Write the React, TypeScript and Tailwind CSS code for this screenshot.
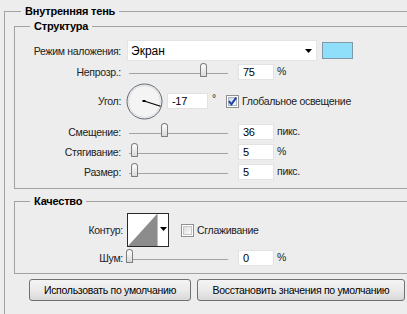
const sliders = { opacity: 75, offset: 36, choke: 5, size: 5, noise: 0 };

function Slider({ value }: { value: number }) {
  // track 99px; thumb centre follows the value
  const left = Math.round((value / 100) * 98) - 3;
  return (
    <div className="relative ml-[8px] h-[16px] w-[99px] shrink-0">
      <div className="mt-[9px] h-px w-full bg-[#a3a3a3]" />
      <div
        className="absolute top-[-1px] h-[14px] w-[7px] rounded-t-[4px] rounded-b-[1px] border border-[#7d7d7d] bg-gradient-to-b from-white to-[#d9d9d9]"
        style={{ left }}
      />
    </div>
  );
}

function Field({ value, width = "w-[36px]", className = "" }: { value: string; width?: string; className?: string }) {
  return (
    <div className={`${width} ${className} flex h-[16px] shrink-0 items-center border border-[#e2e2e2] bg-white pl-[4px] text-[11px] text-black`}>
      {value}
    </div>
  );
}

function Check({ checked }: { checked?: boolean }) {
  return (
    <svg width="13" height="13" className="shrink-0">
      <defs>
        <linearGradient id={checked ? "cbOn" : "cbOff"} x1="0" y1="0" x2="1" y2="1">
          <stop offset="0" stopColor={checked ? "#c9d4e6" : "#d9d9d9"} />
          <stop offset="1" stopColor="#ffffff" />
        </linearGradient>
      </defs>
      <rect x="0.5" y="0.5" width="12" height="12" fill="#fff" stroke="#8e8f8f" />
      <rect x="2.5" y="2.5" width="8" height="8" fill={`url(#${checked ? "cbOn" : "cbOff"})`} stroke={checked ? "#aab6c8" : "#c6c6c6"} />
      {checked && <path d="M3 6.2 L5.4 9.4 L10.2 2.6" stroke="#23459a" strokeWidth="2" fill="none" />}
    </svg>
  );
}

function SliderRow({ label, value, unit, className = "" }: { label: string; value: number; unit: string; className?: string }) {
  return (
    <div className={`flex h-[16px] items-center ${className}`}>
      <div className="w-[106px] shrink-0 text-right">{label}</div>
      <Slider value={value} />
      <Field value={String(value)} className="ml-[10px]" />
      <div className="ml-[3px] -mt-[3px]">{unit}</div>
    </div>
  );
}

export default function App() {
  return (
    <div className="h-[314px] w-[407px] overflow-hidden bg-[#ededed] pl-[4px] pt-[4px] font-['Liberation_Sans',Arial,sans-serif] text-[10.5px] leading-[14px] tracking-[-0.3px] text-[#222]">
      <fieldset className="w-[430px] border border-[#a2a2a2]">
        <legend className="ml-[16px] px-[4px] text-[11px] font-bold tracking-[-0.2px] text-black">Внутренняя тень</legend>

        <fieldset className="ml-[9px] mt-[1px] w-[420px] border border-[#a2a2a2] pb-[8px] pt-[7px]">
          <legend className="ml-[15px] px-[4px] text-[11px] font-bold tracking-[-0.2px] text-black">Структура</legend>

          <div className="flex h-[21px] items-center">
            <div className="w-[106px] shrink-0 text-right">Режим наложения:</div>
            <div className="ml-[6px] flex h-[21px] w-[190px] items-center justify-between border border-[#e4e4e4] bg-white pl-[3px] pr-[4px] text-[12px] tracking-normal text-black">
              <span>Экран</span>
              <svg width="7" height="4">
                <path d="M0 0 H7 L3.5 4 Z" fill="#000" />
              </svg>
            </div>
            <div className="ml-[5px] h-[17px] w-[31px] border border-[#7f9aa6] bg-[#8fdffa]" />
          </div>

          <SliderRow label="Непрозр.:" value={sliders.opacity} unit="%" className="mt-[3px]" />

          <div className="mt-[3px] flex h-[36px] items-center">
            <div className="w-[106px] shrink-0 text-right">Угол:</div>
            <svg width="37" height="37" className="ml-[5px] shrink-0">
              <circle cx="18.5" cy="18.5" r="17.5" fill="#f4f4f4" stroke="#5d6875" />
              <circle cx="18.5" cy="18.5" r="16" fill="none" stroke="#dcdcdc" />
              <line x1="18" y1="18" x2="34.6" y2="23.2" stroke="#000" strokeWidth="1.2" />
              <rect x="16.5" y="17" width="3" height="2" fill="#000" />
            </svg>
            <Field value="-17" width="w-[41px]" className="ml-[4px]" />
            <div className="ml-[4px] -mt-[7px]">°</div>
            <div className="ml-[10px] flex items-center gap-[3px]">
              <Check checked />
              <span>Глобальное освещение</span>
            </div>
          </div>

          <SliderRow label="Смещение:" value={sliders.offset} unit="пикс." className="mt-[5px]" />
          <SliderRow label="Стягивание:" value={sliders.choke} unit="%" className="mt-[4px]" />
          <SliderRow label="Размер:" value={sliders.size} unit="пикс." className="mt-[4px]" />
        </fieldset>

        <fieldset className="ml-[9px] mt-[5px] w-[420px] border border-[#a2a2a2] pb-[7px] pt-[5px]">
          <legend className="ml-[15px] px-[4px] text-[11px] font-bold tracking-[-0.2px] text-black">Качество</legend>

          <div className="flex h-[34px] items-center">
            <div className="w-[108px] shrink-0 text-right">Контур:</div>
            <svg width="42" height="34" className="ml-[4px] shrink-0">
              <rect x="0.5" y="0.5" width="41" height="33" fill="#fff" stroke="#2a2a2a" />
              <path d="M1 33 L30 1 V33 Z" fill="#8c8c8c" />
              <line x1="30.5" y1="1" x2="30.5" y2="33" stroke="#bdbdbd" />
              <path d="M33 14 H40 L36.5 18 Z" fill="#000" />
            </svg>
            <div className="ml-[12px] flex items-center gap-[3px]">
              <Check />
              <span>Сглаживание</span>
            </div>
          </div>

          <div className="mt-[3px] flex h-[16px] items-center">
            <div className="w-[108px] shrink-0 text-right">Шум:</div>
            <div className="-ml-[2px] flex items-center">
              <Slider value={sliders.noise} />
            </div>
            <Field value="0" className="ml-[10px]" />
            <div className="ml-[3px] -mt-[3px]">%</div>
          </div>
        </fieldset>

        <div className="ml-[24px] mt-[5px] flex gap-[6px] pb-[20px]">
          <button className="h-[22px] w-[162px] rounded-[3px] border border-[#707070] bg-gradient-to-b from-[#f4f4f4] via-[#ebebeb] to-[#d8d8d8] text-black">
            Использовать по умолчанию
          </button>
          <button className="h-[22px] w-[208px] rounded-[3px] border border-[#707070] bg-gradient-to-b from-[#f4f4f4] via-[#ebebeb] to-[#d8d8d8] text-black">
            Восстановить значения по умолчанию
          </button>
        </div>
      </fieldset>
    </div>
  );
}
